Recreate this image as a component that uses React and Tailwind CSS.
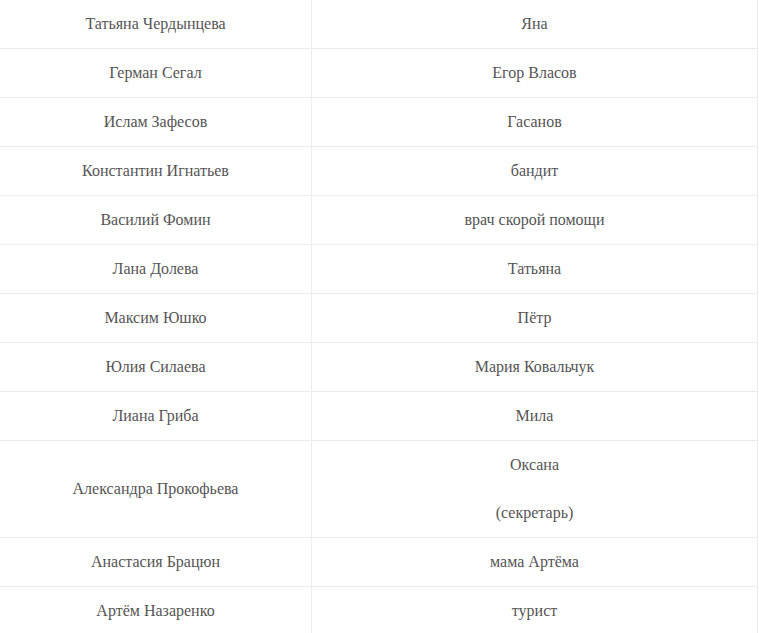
import React from "react";

const rows = [
  ["Татьяна Чердынцева", ["Яна"]],
  ["Герман Сегал", ["Егор Власов"]],
  ["Ислам Зафесов", ["Гасанов"]],
  ["Константин Игнатьев", ["бандит"]],
  ["Василий Фомин", ["врач скорой помощи"]],
  ["Лана Долева", ["Татьяна"]],
  ["Максим Юшко", ["Пётр"]],
  ["Юлия Силаева", ["Мария Ковальчук"]],
  ["Лиана Гриба", ["Мила"]],
  ["Александра Прокофьева", ["Оксана", "(секретарь)"]],
  ["Анастасия Брацюн", ["мама Артёма"]],
  ["Артём Назаренко", ["турист"]],
];

export default function App() {
  return (
    <div className="w-[759px] h-[633px] overflow-hidden bg-white text-[#555] text-[16px] leading-[24px] font-['Liberation_Serif','Times_New_Roman',serif]">
      <div className="w-[758px] border-r border-[#ececec]">
        {rows.map(([a, b], i) => (
          <div key={i} className="flex border-b border-[#ececec]">
            <div className="w-[312px] shrink-0 border-r border-[#ececec] flex items-center justify-center py-3 text-center">
              {a}
            </div>
            <div className="flex-1 flex flex-col items-center justify-center py-3 gap-6 text-center">
              {b.map((t, j) => (
                <div key={j}>{t}</div>
              ))}
            </div>
          </div>
        ))}
      </div>
    </div>
  );
}
